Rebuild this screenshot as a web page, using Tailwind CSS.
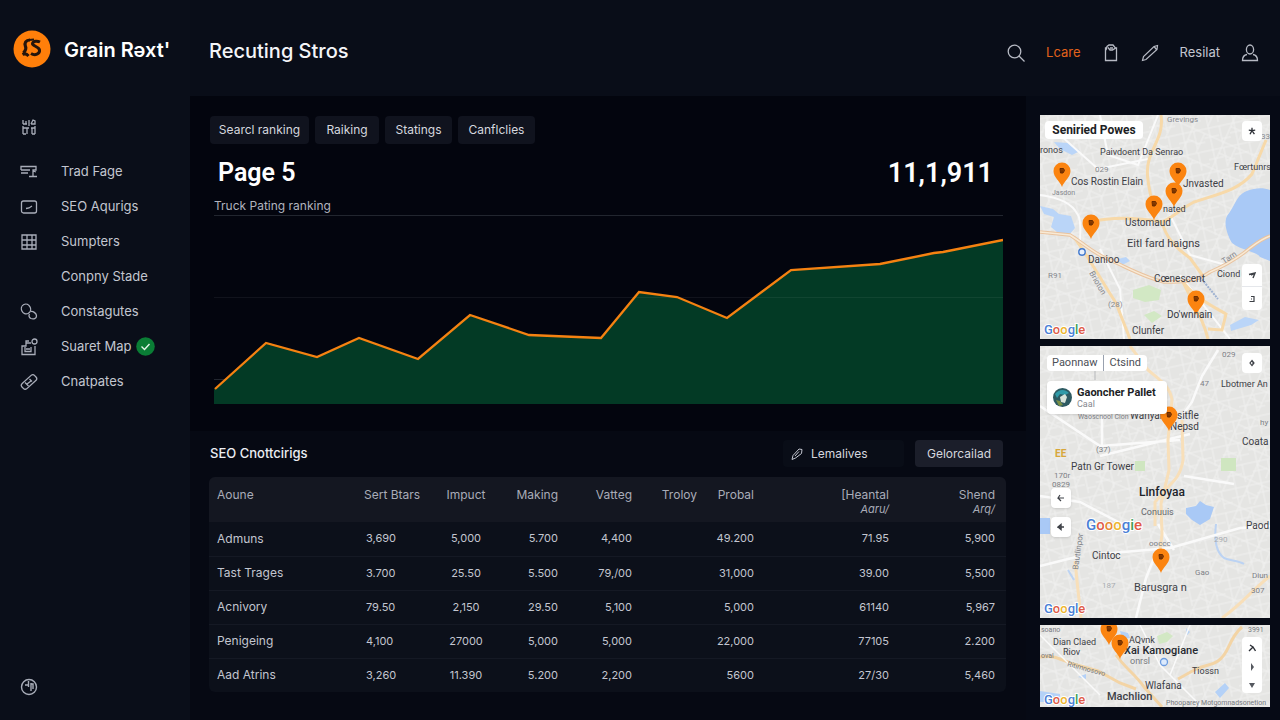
<!DOCTYPE html>
<html lang="en">

<head>
    <meta charset="UTF-8">
    <meta name="viewport" content="width=device-width, initial-scale=1.0">
    <title>Recuting Stros</title>
    <script src="https://cdn.jsdelivr.net/npm/@tailwindcss/browser@4"></script>
</head>

<body class="flex min-h-screen bg-[#03060f] font-[Inter,sans-serif] text-[#c3c6d0]">
    <!-- Shared map artwork -->
    <svg class="absolute h-0 w-0" aria-hidden="true">
        <defs>
            <g id="pin">
                <path d="M0 16C-2 10-8.500 6.500-8.500 0a8.500 8.500 0 0 1 17 0C8.500 6.500 2 10 0 16z" fill="#fb8410" />
                <path d="M-2-2.500h3.500l1 2-1.500 2.500h-2.500zM0-.500v2.500" fill="#8a3c00" stroke="#6b2c00" stroke-width="1" />
            </g>
            <pattern id="streets" width="26" height="22" patternUnits="userSpaceOnUse" patternTransform="rotate(-12)">
                <path d="M0 4h26M0 13h15M6 0v22M17 4v18M17 17h9" fill="none" stroke="#f0f0ef" stroke-width="1" />
            </pattern>
            <pattern id="streets-b" width="34" height="29" patternUnits="userSpaceOnUse" patternTransform="rotate(24)">
                <path d="M0 8h34M9 0v29M22 8v21M9 20h13" fill="none" stroke="#f0f0ef" stroke-width="1" />
            </pattern>
        </defs>
    </svg>

    <!-- Sidebar -->
    <aside class="flex w-[190px] shrink-0 flex-col bg-[#0a0e19]">
        <a href="#" class="flex items-center gap-[13px] pt-[30px] pl-[13px]">
            <svg class="h-[38px] w-[38px]" viewBox="0 0 38 38" fill="none">
                <circle cx="19" cy="19" r="18.500" fill="#ff7f0a" />
                <path d="M17 10c-4 0-6 3-4.500 6.500 1 2 0 4-2 6.500" stroke="#24150c" stroke-width="3.200" />
                <path d="M9.500 24.500c2-1 4.500-.500 6 1.500" stroke="#24150c" stroke-width="3" />
                <path d="M27 12c-3-1.500-7-1-7.500 1.500s6.500 3 7 6.500c.500 4-4.500 6-8.500 3.500" stroke="#24150c" stroke-width="3" />
                <path d="M16 10l5-.500" stroke="#24150c" stroke-width="2" />
            </svg>
            <span class="pt-[2px] text-xl leading-7 font-semibold text-white">Grain Rəxt'</span>
        </a>

        <nav class="flex flex-1 flex-col pt-12 pb-6 text-[13px]">
            <a href="#" class="flex h-[22px] items-center pl-5" aria-label="Home">
                <svg class="h-[18px] w-[18px]" viewBox="0 0 18 18" fill="none" stroke="#a9adb9" stroke-width="1.300">
                    <path d="M3 16V8M3 6V2M6 6V3M3 6h4M9 2v6M6 16H3M7 10v6M12 10v6M15 16V8M11 6l2-4 2 1v3h-4M3 10h6M11 10h4M12 16h3" />
                </svg>
            </a>
            <div class="mt-4 flex flex-col">
                <a href="#" class="flex h-[35px] items-center gap-[23px] pl-5">
                    <svg class="h-[18px] w-[18px]" viewBox="0 0 18 18" fill="none" stroke="#a9adb9" stroke-width="1.300">
                        <path d="M1 7V3.500h15V7h-3v7M1 7h9M1 10h7M9 13.500h8M13 8l3 1" />
                    </svg>
                    Trad Fage
                </a>
                <a href="#" class="flex h-[35px] items-center gap-[23px] pl-5">
                    <svg class="h-[18px] w-[18px]" viewBox="0 0 18 18" fill="none" stroke="#a9adb9" stroke-width="1.300">
                        <rect x="1.500" y="3" width="15" height="12" rx="2" />
                        <path d="M6 10.500l3-.500 3-2" />
                    </svg>
                    SEO Aqurigs
                </a>
                <a href="#" class="flex h-[35px] items-center gap-[23px] pl-5">
                    <svg class="h-[18px] w-[18px]" viewBox="0 0 18 18" fill="none" stroke="#a9adb9" stroke-width="1.300">
                        <path d="M2 2h14v14H2zM2 7h14M2 12h14M7 2v14M12 2v14" />
                    </svg>
                    Sumpters
                </a>
                <a href="#" class="flex h-[35px] items-center pl-[61px]">Conpny Stade</a>
                <a href="#" class="flex h-[35px] items-center gap-[23px] pl-5">
                    <svg class="h-[18px] w-[18px]" viewBox="0 0 18 18" fill="none" stroke="#a9adb9" stroke-width="1.300">
                        <ellipse cx="6" cy="6" rx="4.500" ry="5" transform="rotate(-25 6 6)" />
                        <path d="M10.500 8.500c3-.500 6 2 6 4.500s-3 3.500-5.500 2.500c-2-1-2.500-3-1.500-4.500" />
                    </svg>
                    Constagutes
                </a>
                <a href="#" class="flex h-[35px] items-center gap-[23px] pl-5">
                    <svg class="h-[18px] w-[18px]" viewBox="0 0 18 18" fill="none" stroke="#a9adb9" stroke-width="1.300">
                        <path d="M11 5H6v3H2v8.500h13V8M5 9v4.500h6V9M6 5V3h3M6 11h4" />
                        <circle cx="14.500" cy="3.500" r="2.500" />
                    </svg>
                    <span class="flex items-center gap-1">
                        Suaret Map
                        <svg class="h-[19px] w-[19px]" viewBox="0 0 19 19" fill="none">
                            <circle cx="9.500" cy="9.500" r="9.300" fill="#0a7d35" />
                            <path d="M5.500 9.500l3 3 5-5.500" stroke="#e6f5ea" stroke-width="1.400" />
                        </svg>
                    </span>
                </a>
                <a href="#" class="flex h-[35px] items-center gap-[23px] pl-5">
                    <svg class="h-[18px] w-[18px]" viewBox="0 0 18 18" fill="none" stroke="#a9adb9" stroke-width="1.300">
                        <rect x="0.500" y="5.500" width="17" height="7" rx="2.500" transform="rotate(-42 9 9)" />
                        <path d="M5 9.500l3.500 3.500M9.500 6l2.500 2.500M7 11l4-3" />
                    </svg>
                    Cnatpates
                </a>
            </div>
            <a href="#" class="mt-auto pl-5" aria-label="Help">
                <svg class="h-[18px] w-[18px]" viewBox="0 0 18 18" fill="none" stroke="#a9adb9" stroke-width="1.400">
                    <circle cx="9" cy="9" r="7.500" />
                    <path d="M8.500 3v6M5 7h3M11 5v8M11 6h2v5" />
                </svg>
            </a>
        </nav>
    </aside>

    <div class="flex min-w-0 flex-1 flex-col">
        <!-- Header -->
        <header class="flex h-24 items-center justify-between bg-[#090d18] pt-[9px] pr-[21px] pl-[19px]">
            <h1 class="pb-1 text-xl leading-7 font-medium text-[#f4f5f8]">Recuting Stros</h1>
            <div class="flex items-center gap-[21px] text-[13px]">
                <button type="button" aria-label="Search">
                    <svg class="h-[18px] w-[18px]" viewBox="0 0 18 18" fill="none" stroke="#b7bac4" stroke-width="1.300">
                        <circle cx="7.500" cy="7.500" r="6.300" />
                        <path d="M12 12l5.500 5.500" />
                    </svg>
                </button>
                <a href="#" class="text-[#e2621b]">Lcare</a>
                <button type="button" aria-label="Clipboard">
                    <svg class="h-[18px] w-[18px]" viewBox="0 0 18 18" fill="none" stroke="#b7bac4" stroke-width="1.300">
                        <path d="M5 4H3.500v12.500h11V4h-1M4 6l1-3.500 2-1.500h4l2.500 3-3 2H8L6 3.500M8 4h3" />
                    </svg>
                </button>
                <button type="button" aria-label="Edit">
                    <svg class="h-[18px] w-[18px]" viewBox="0 0 18 18" fill="none" stroke="#b7bac4" stroke-width="1.200">
                        <path d="M1.500 16.500l1-4L13 2.500l3.500-1-.500 4L5 15.500zM13 2.500l2.500 3" />
                    </svg>
                </button>
                <a href="#">Resilat</a>
                <button type="button" aria-label="Account">
                    <svg class="h-[18px] w-[18px]" viewBox="0 0 18 18" fill="none" stroke="#b7bac4" stroke-width="1.300">
                        <ellipse cx="9" cy="5.500" rx="3.600" ry="4.500" />
                        <path d="M6 10.500c-3 .500-4.500 2.500-4.500 6h15c0-3.500-1.500-5.500-4.500-6" />
                    </svg>
                </button>
            </div>
        </header>

        <div class="flex flex-1">
            <main class="flex min-w-0 flex-1 flex-col">
                <!-- Ranking chart -->
                <section class="bg-[#03050e] pt-5 pr-[23px] pb-[26px] pl-5">
                    <div class="flex gap-[6px] text-xs text-[#d5d7df]">
                        <button type="button" class="h-7 w-[99px] rounded bg-[#10131e] whitespace-nowrap">Searcl ranking</button>
                        <button type="button" class="h-7 w-16 rounded bg-[#10131e]">Raiking</button>
                        <button type="button" class="h-7 w-[67px] rounded bg-[#10131e]">Statings</button>
                        <button type="button" class="h-7 w-[77px] rounded bg-[#10131e]">Canflclies</button>
                    </div>
                    <div class="flex items-center justify-between pt-[13px] pr-[10px] pl-2 font-[Roboto,sans-serif] leading-8 font-semibold text-white">
                        <h2 class="text-[25px]">Page 5</h2>
                        <p class="text-[27px]">11,1,911</p>
                    </div>
                    <p class="pt-[9px] pl-1 text-xs leading-4 text-[#b1b4bf]">Truck Pating ranking</p>
                    <svg class="mt-px ml-1 h-[190px] w-[calc(100%-4px)]" viewBox="0 0 789 190" preserveAspectRatio="none" fill="none">
                        <path d="M0 .500h789" stroke="#22262f" />
                        <path d="M0 164.500h30" stroke="#22262f" />
                        <path d="M0 174l52-46 51 14 42-19 59 21 52-44 59 20 72 3 38-46 38 5 50 21 64-48 89-6 54-11 9-1 60-12v164H0z" fill="#033a25" />
                        <path d="M0 82.500h789" stroke="#ffffff" stroke-opacity=".06" />
                        <path d="M1 174l51-46 51 14 42-19 59 21 52-44 59 20 72 3 38-46 38 5 50 21 64-48 89-6 54-11 9-1 60-12" stroke="#f58211" stroke-width="2.300" />
                    </svg>
                </section>

                <!-- Listings table -->
                <section class="flex-1 bg-[#060913] pt-[9px] pr-5 pb-7 pl-[19px]">
                    <div class="flex items-center justify-between pr-[3px] pl-px">
                        <h2 class="text-[13px] font-medium text-[#eceef3]">SEO Cnottcirigs</h2>
                        <div class="flex gap-[11px] text-xs text-[#d5d7df]">
                            <button type="button" class="flex h-[27px] w-[121px] items-center gap-2 rounded bg-[#090d17] pl-2">
                                <svg class="h-3 w-3" viewBox="0 0 12 12" fill="none" stroke="#c3c6d0">
                                    <path d="M1 11.500L2 7.500 8 1l3 .500-.500 4L4.500 10zM4 8l4-4.500" />
                                </svg>
                                Lemalives
                            </button>
                            <button type="button" class="h-[27px] w-[88px] rounded bg-[#1b1e2a]">Gelorcailad</button>
                        </div>
                    </div>
                    <table class="mt-[10px] w-full table-fixed overflow-hidden rounded-md bg-[#0c101a] text-xs">
                        <colgroup>
                            <col class="w-[155px]">
                            <col class="w-[72px]">
                            <col class="w-[60px]">
                            <col class="w-[62px]">
                            <col class="w-[74px]">
                            <col class="w-[65px]">
                            <col class="w-[57px]">
                            <col class="w-[135px]">
                            <col class="w-[117px]">
                        </colgroup>
                        <thead class="bg-[#141721] text-right text-[#a9acb8]">
                            <tr class="h-[45px] align-top leading-[14px] whitespace-nowrap">
                                <th class="pt-[11px] pl-2 text-left font-normal">Aoune</th>
                                <th class="pt-[11px] text-left font-normal">Sert Btars</th>
                                <th class="pt-[11px] text-center font-normal">Impuct</th>
                                <th class="pt-[11px] font-normal">Making</th>
                                <th class="pt-[11px] font-normal">Vatteg</th>
                                <th class="pt-[11px] font-normal">Troloy</th>
                                <th class="pt-[11px] font-normal">Probal</th>
                                <th class="pt-[11px] font-normal">[Heantal<br><i class="text-[11px]">Aaru/</i></th>
                                <th class="pt-[11px] pr-[11px] font-normal">Shend<br><i class="text-[11px]">Arq/</i></th>
                            </tr>
                        </thead>
                        <tbody class="divide-y divide-[#151924] text-right text-[#c3c6d0]">
                            <tr class="h-[34px]">
                                <td class="pl-2 text-left">Admuns</td>
                                <td class="pl-[2px] text-left text-[11px]">3,690</td>
                                <td class="text-center text-[11px]">5,000</td>
                                <td class="text-[11px]">5.700</td>
                                <td class="text-[11px]">4,400</td>
                                <td></td>
                                <td class="text-[11px]">49.200</td>
                                <td class="text-[11px]">71.95</td>
                                <td class="pr-[11px] text-[11px]">5,900</td>
                            </tr>
                            <tr class="h-[34px]">
                                <td class="pl-2 text-left">Tast Trages</td>
                                <td class="pl-[2px] text-left text-[11px]">3.700</td>
                                <td class="text-center text-[11px]">25.50</td>
                                <td class="text-[11px]">5.500</td>
                                <td class="text-[11px]">79,/00</td>
                                <td></td>
                                <td class="text-[11px]">31,000</td>
                                <td class="text-[11px]">39.00</td>
                                <td class="pr-[11px] text-[11px]">5,500</td>
                            </tr>
                            <tr class="h-[34px]">
                                <td class="pl-2 text-left">Acnivory</td>
                                <td class="pl-[2px] text-left text-[11px]">79.50</td>
                                <td class="text-center text-[11px]">2,150</td>
                                <td class="text-[11px]">29.50</td>
                                <td class="text-[11px]">5,100</td>
                                <td></td>
                                <td class="text-[11px]">5,000</td>
                                <td class="text-[11px]">61140</td>
                                <td class="pr-[11px] text-[11px]">5,967</td>
                            </tr>
                            <tr class="h-[34px]">
                                <td class="pl-2 text-left">Penigeing</td>
                                <td class="pl-[2px] text-left text-[11px]">4,100</td>
                                <td class="text-center text-[11px]">27000</td>
                                <td class="text-[11px]">5,000</td>
                                <td class="text-[11px]">5,000</td>
                                <td></td>
                                <td class="text-[11px]">22,000</td>
                                <td class="text-[11px]">77105</td>
                                <td class="pr-[11px] text-[11px]">2.200</td>
                            </tr>
                            <tr class="h-[34px]">
                                <td class="pl-2 text-left">Aad Atrins</td>
                                <td class="pl-[2px] text-left text-[11px]">3,260</td>
                                <td class="text-center text-[11px]">11.390</td>
                                <td class="text-[11px]">5.200</td>
                                <td class="text-[11px]">2,200</td>
                                <td></td>
                                <td class="text-[11px]">5600</td>
                                <td class="text-[11px]">27/30</td>
                                <td class="pr-[11px] text-[11px]">5,460</td>
                            </tr>
                        </tbody>
                    </table>
                </section>
            </main>

            <!-- Maps -->
            <aside class="flex w-[254px] shrink-0 flex-col gap-[7px] bg-[#060a15] pt-[19px] pr-[10px] pb-[13px] pl-[14px] font-[Roboto,sans-serif] text-[#33363d]">
                <div class="relative h-56 overflow-hidden bg-[#e5e5e3]">
                    <svg class="h-full w-full" viewBox="0 0 230 224" preserveAspectRatio="xMidYMid slice" fill="none">
                        <rect width="230" height="224" fill="url(#streets)" />
                        <rect width="230" height="224" fill="url(#streets-b)" />
                        <path d="M230 75c-10-4-26-1-32 8-5 8-7 13-11 18-4 8 1 20 5 27 10 8 24 8 28 14l10 4z" fill="#a9c9f6" />
                        <path d="M0 91l13 3 6 5 12 2 4 12-6 7-12-3-6-5 3-10-10-3zM14 27l14 1 12 8-8 4-12-6zM190 210l15-8 14 3-8 5-20 6zM78 144l8-2 4 4-8 4z" fill="#bad5f8" />
                        <path d="M93 175l16-5 12 5-2 10-14 2-12-4zM104 200l10-4 8 5-10 7z" fill="#d2e8c4" />
                        <path d="M0 80c20 3 32 8 38 20s-2 28 6 38M60 0l8 40 30 10 20-50M20 20l38 34 50-10M140 160l50 64M60 134l20 40 4 50M130 100l20 40 36 10" stroke="#fafafa" stroke-width="2" />
                        <path d="M121 0c3 20-8 30-12 45-5 16 3 36 5 54M50 107c25-6 50-4 72 0 10-4 20-14 32-20 24-8 45-12 58-28l14-34M122 107c4 16 14 26 28 36l13 18M142 165c10 16 30 26 44 34l-4 16-14-1M142 165c8 18 20 34 26 59M34 122c16 22 28 45 42 66l14 36" stroke="#f7d9a9" stroke-width="3" />
                        <path d="M0 117l30 3c16 10 24 19 40 25 22 10 36 18 54 22 18 0 32 0 46-10 14-6 28-14 40-24 8-6 14-10 20-12" stroke="#e9c39f" stroke-width="3.500" />
                        <path d="M0 117l30 3c16 10 24 19 40 25 22 10 36 18 54 22 18 0 32 0 46-10 14-6 28-14 40-24 8-6 14-10 20-12" stroke="#f8ead6" stroke-width="1.500" />
                        <path d="M160 162l18 22" stroke="#9fb2d1" stroke-width="2" stroke-dasharray="2 1" />
                        <circle cx="42" cy="137" r="3.200" fill="#e8f0fc" stroke="#4179cf" stroke-width="1.400" />
                        <g font-size="10" fill="#3d4046">
                            <text x="0" y="38" font-size="9">ronos</text>
                            <text x="60" y="40" font-size="9">Paivdoent Da Senrao</text>
                            <text x="194" y="55" font-size="9">Fœrtunrs</text>
                            <text x="31" y="70">Cos Rostin Elain</text>
                            <text x="143" y="72">Jnvasted</text>
                            <text x="123" y="97" font-size="9">nated</text>
                            <text x="85" y="111">Ustomaud</text>
                            <text x="87" y="132" font-size="11">Eitl fard haigns</text>
                            <text x="48" y="148">Danioo</text>
                            <text x="114" y="167">Cœnescent</text>
                            <text x="177" y="162" font-size="9">Ciond</text>
                            <text x="92" y="219">Clunfer</text>
                        </g>
                        <g font-size="8" fill="#85888e">
                            <text x="127" y="7">Grevings</text>
                            <text x="55" y="57">029</text>
                            <text x="12" y="80" font-size="7">Jasdon</text>
                            <text x="8" y="163">R91</text>
                            <text x="68" y="192">(28)</text>
                            <text x="221" y="24">33</text>
                            <text transform="translate(49 158) rotate(60)">Brioton</text>
                            <text transform="translate(184 149) rotate(-33)">Tarn</text>
                        </g>
                        <use href="#pin" x="22" y="56" />
                        <use href="#pin" x="138" y="56" />
                        <use href="#pin" x="134" y="76" />
                        <use href="#pin" x="114" y="89" />
                        <use href="#pin" x="51" y="108" />
                        <use href="#pin" x="156" y="184" />
                        <text x="127" y="203" font-size="10" fill="#33363d">Do'wnnain</text>
                        <text x="4" y="219" font-size="13" font-weight="500" stroke="#fff" stroke-width="2" paint-order="stroke"><tspan fill="#4a7fd6">G</tspan><tspan fill="#df5b49">o</tspan><tspan fill="#eeb52e">o</tspan><tspan fill="#4a7fd6">g</tspan><tspan fill="#3f9d57">l</tspan><tspan fill="#df5b49">e</tspan></text>
                    </svg>
                    <h3 class="absolute top-[6px] left-[5px] w-[98px] rounded-sm bg-white text-center text-xs leading-[18px] font-bold whitespace-nowrap text-[#1c1e24]">Seniried Powes</h3>
                    <button type="button" class="absolute top-[6px] right-2 flex h-5 w-5 items-center justify-center rounded-sm bg-white" aria-label="Favourite">
                        <svg class="h-2 w-2" viewBox="0 0 10 10" fill="none" stroke="#2b2e35" stroke-width="1.600"><path d="M5 1v3.500L9 4M5 4.500L1 4M5 4.500L2.500 9M5 4.500L8 9" /></svg>
                    </button>
                    <div class="absolute right-2 bottom-[29px] flex flex-col divide-y divide-gray-200 rounded-sm bg-white">
                        <button type="button" class="flex h-[23px] w-5 items-center justify-center" aria-label="Locate">
                            <svg class="h-2 w-2" viewBox="0 0 8 8" fill="none" stroke="#3d4046" stroke-width="1.400"><path d="M1 3.500l6-1.500-2 5M3 4l3-1.500" /></svg>
                        </button>
                        <button type="button" class="flex h-[23px] w-5 items-center justify-center" aria-label="Layers">
                            <svg class="h-2 w-2" viewBox="0 0 8 8" fill="none" stroke="#3d4046" stroke-width="1.200"><path d="M3 1.500h3v5H1.500M3 4h1" /></svg>
                        </button>
                    </div>
                </div>

                <div class="relative h-68 overflow-hidden bg-[#e5e5e3]">
                    <svg class="h-full w-full" viewBox="0 0 230 272" preserveAspectRatio="xMidYMid slice" fill="none">
                        <rect width="230" height="272" fill="url(#streets)" />
                        <rect width="230" height="272" fill="url(#streets-b)" />
                        <path d="M146 162l10-2 4-5 6 4 8 2-4 12-10 6-8-5-6-6zM0 172h10v16H0z" fill="#a9c9f6" />
                        <path d="M181 112h15v13h-15zM95 115h10v10H95z" fill="#cfe6c0" />
                        <path d="M176 178c-2 16 0 28 8 34 6 3 14 2 20 6M28 224l6 10" stroke="#bcd3f3" stroke-width="2" />
                        <path d="M178 4l-16 26-10 26-10 14M0 150l40 6 46 24M62 70v30M0 60l60 40 80-6M60 110l90-22M144 130l50 8M118 178l16 26M96 272l10-40 12-30M60 208l70-6 70-20 30-2M0 220l40-10" stroke="#fafafa" stroke-width="2.500" />
                        <path d="M90 0l18 24c12 10 22 16 24 30l-4 40 1 30-8 34 1 30-2 16M142 74l1 40c-2 14-8 20-14 26l-14 16v24M35 215l2 20 4 37M230 230c-20 16-28 28-48 42" stroke="#f8dfb9" stroke-width="3" />
                        <path d="M55 16v18" stroke="#b5b7ba" />
                        <g font-size="10" fill="#3d4046">
                            <text x="181" y="41" font-size="9">Lbotmer An</text>
                            <text x="90" y="73">Wanyan</text>
                            <text x="137" y="73">sitfle</text>
                            <text x="130" y="84">Nepsd</text>
                            <text x="202" y="99">Coata</text>
                            <text x="31" y="124">Patn Gr Tower</text>
                            <text x="99" y="150" font-size="12" font-weight="500" fill="#202329">Linfoyaa</text>
                            <text x="101" y="169" font-size="9" fill="#64676d">Conuuis</text>
                            <text x="206" y="183">Paod</text>
                            <text x="52" y="213">Cintoc</text>
                            <text x="94" y="245" font-size="11">Barusgra n</text>
                        </g>
                        <g font-size="8" fill="#7d8086">
                            <text x="38" y="73" font-size="7">Waoscnool Cion</text>
                            <text x="182" y="11">029</text>
                            <text x="160" y="40">47</text>
                            <text x="56" y="106">(37)</text>
                            <text x="220" y="79">hy</text>
                            <text x="14" y="132">170r</text>
                            <text x="12" y="141">0829</text>
                            <text x="109" y="200">ooccc</text>
                            <text x="155" y="229">Gao</text>
                            <text x="212" y="232">Diun</text>
                            <text x="211" y="247">307</text>
                            <text x="62" y="242" fill="#a8abb0">187</text>
                            <text x="174" y="196" fill="#a8abb0">290</text>
                            <text transform="translate(38 224) rotate(-82)">Bautlinpor</text>
                        </g>
                        <text x="15" y="111" font-size="10" font-weight="700" fill="#d8a73a">EE</text>
                        <use href="#pin" x="129" y="69" />
                        <use href="#pin" x="121" y="211" />
                        <text x="46" y="184" font-size="15" font-weight="500" stroke="#fff" stroke-width="2" paint-order="stroke"><tspan fill="#4a7fd6">G</tspan><tspan fill="#df5b49">o</tspan><tspan fill="#e78b34">o</tspan><tspan fill="#eeb52e">o</tspan><tspan fill="#4a7fd6">g</tspan><tspan fill="#3f9d57">i</tspan><tspan fill="#df5b49">e</tspan></text>
                        <text x="4" y="267" font-size="13" font-weight="500" stroke="#fff" stroke-width="2" paint-order="stroke"><tspan fill="#4a7fd6">G</tspan><tspan fill="#df5b49">o</tspan><tspan fill="#eeb52e">o</tspan><tspan fill="#4a7fd6">g</tspan><tspan fill="#4a7fd6">l</tspan><tspan fill="#df5b49">e</tspan></text>
                    </svg>
                    <div class="absolute top-[9px] left-[7px] flex divide-x divide-gray-400 rounded-sm bg-white text-[11px] leading-4 text-[#4c4f56]">
                        <button type="button" class="px-[5px]">Paonnaw</button>
                        <button type="button" class="px-[6px]">Ctsind</button>
                    </div>
                    <button type="button" class="absolute top-[7px] right-2 flex h-5 w-5 items-center justify-center rounded-sm bg-white" aria-label="Locate">
                        <svg class="h-2 w-2" viewBox="0 0 8 8" fill="none" stroke="#3d4046" stroke-width="1.200"><path d="M4 1.500L2 4l2 2.500L6 4zM4 4h2" /></svg>
                    </button>
                    <div class="absolute top-[35px] left-[7px] flex h-[33px] w-[120px] items-center gap-[5px] rounded bg-white pl-[6px] shadow">
                        <svg class="h-[19px] w-[19px] shrink-0" viewBox="0 0 19 19">
                            <circle cx="9.500" cy="9.500" r="9.500" fill="#2d5a62" />
                            <path d="M2 6c4-5 10-5 14-1l-4 2-5-1-3 4z" fill="#2f9aa8" />
                            <path d="M7 9l5-3 2 3-2 6-4-1z" fill="#d7e3da" />
                            <path d="M3 12l4 1 3 4-4 1z" fill="#7a8f45" />
                        </svg>
                        <div>
                            <p class="text-[11px] leading-3 font-bold whitespace-nowrap text-[#1c1e24]">Gaoncher Pallet</p>
                            <p class="text-[9px] leading-[10px] text-[#85888e]">Caal</p>
                        </div>
                    </div>
                    <div class="absolute top-[142px] left-[11px] flex flex-col gap-[9px]">
                        <button type="button" class="flex h-5 w-5 items-center justify-center rounded-sm bg-white shadow" aria-label="Back">
                            <svg class="h-2 w-2" viewBox="0 0 8 8" fill="none" stroke="#3d4046" stroke-width="1.200"><path d="M7 4H1l2-3M1 4l3 3" /></svg>
                        </button>
                        <button type="button" class="flex h-5 w-5 items-center justify-center rounded-sm bg-white shadow" aria-label="Forward">
                            <svg class="h-2 w-2" viewBox="0 0 8 8" fill="none" stroke="#3d4046" stroke-width="1.400"><path d="M7 4H1l3-2.500v5L1 4" /></svg>
                        </button>
                    </div>
                </div>

                <div class="relative h-[82px] overflow-hidden bg-[#e5e5e3]">
                    <svg class="h-full w-full" viewBox="0 0 230 82" preserveAspectRatio="xMidYMid slice" fill="none">
                        <rect width="230" height="82" fill="url(#streets)" />
                        <rect width="230" height="82" fill="url(#streets-b)" />
                        <path d="M175 67l10-9 4 5-9 10zM80 6l8 2 2 5-8 1zM0 66l20 3v8H0zM38 52l8-3v5zM146 3l4 4-3 3z" fill="#b4d1f7" />
                        <path d="M117 11l10-4 6 4-6 6-8 2z" fill="#d2e8c4" />
                        <path d="M0 32c14-2 20 2 30 6l28 8 22 12 16 6M76 30c10 14 20 20 28 32l18 20M138 54l18-10c10-4 16-4 22-8 12-8 10-22 24-34" stroke="#f3d4a5" stroke-width="3" />
                        <path d="M100 0l20 40 40 40M0 10l60 60M150 0l-20 50" stroke="#fafafa" stroke-width="1.500" />
                        <circle cx="124" cy="37" r="3.500" fill="#dceafc" stroke="#6c9ce0" stroke-width="1.300" />
                        <g font-size="9" fill="#3d4046">
                            <text x="13" y="20">Dian Claed</text>
                            <text x="23" y="30">Riov</text>
                            <text x="89" y="18">AQvnk</text>
                            <text x="84" y="29" font-size="11" font-weight="500" fill="#26292f">Xai Kamogiane</text>
                            <text x="90" y="39" fill="#777a80">onrsl</text>
                            <text x="152" y="49">Tiossn</text>
                            <text x="105" y="64" font-size="10">Wlafana</text>
                            <text x="67" y="75" font-size="11" font-weight="500">Machlion</text>
                        </g>
                        <g font-size="7" fill="#777a80">
                            <text x="1" y="7">soano</text>
                            <text x="1" y="33">oval</text>
                            <text x="208" y="7">3991</text>
                            <text transform="translate(27 41) rotate(15)">Ritimnosovo</text>
                            <text x="126" y="80">Phooparey Motgomnadsonetion</text>
                        </g>
                        <use href="#pin" x="69" y="4" />
                        <use href="#pin" x="80" y="18" />
                        <text x="4" y="79" font-size="13" font-weight="500" stroke="#fff" stroke-width="2" paint-order="stroke"><tspan fill="#4a7fd6">G</tspan><tspan fill="#df5b49">o</tspan><tspan fill="#eeb52e">o</tspan><tspan fill="#4a7fd6">g</tspan><tspan fill="#3f9d57">l</tspan><tspan fill="#df5b49">e</tspan></text>
                    </svg>
                    <div class="absolute top-3 right-2 flex flex-col items-center rounded-sm bg-white">
                        <button type="button" class="flex h-[21px] w-5 items-center justify-center" aria-label="Up">
                            <svg class="h-2 w-2" viewBox="0 0 8 8" fill="none" stroke="#2b2e35" stroke-width="1.400"><path d="M1 7l4-4 2.500 4M2 1l3 2" /></svg>
                        </button>
                        <button type="button" class="flex h-[18px] w-5 items-center justify-center" aria-label="Compass">
                            <svg class="h-2 w-2" viewBox="0 0 8 8" fill="#55585f"><path d="M3 0l3 4-3 4z" /></svg>
                        </button>
                        <button type="button" class="flex h-[17px] w-5 items-center justify-center" aria-label="Down">
                            <svg class="h-2 w-2" viewBox="0 0 8 8" fill="#55585f"><path d="M1 2h6L4 7z" /></svg>
                        </button>
                    </div>
                </div>
            </aside>
        </div>
    </div>
</body>

</html>
